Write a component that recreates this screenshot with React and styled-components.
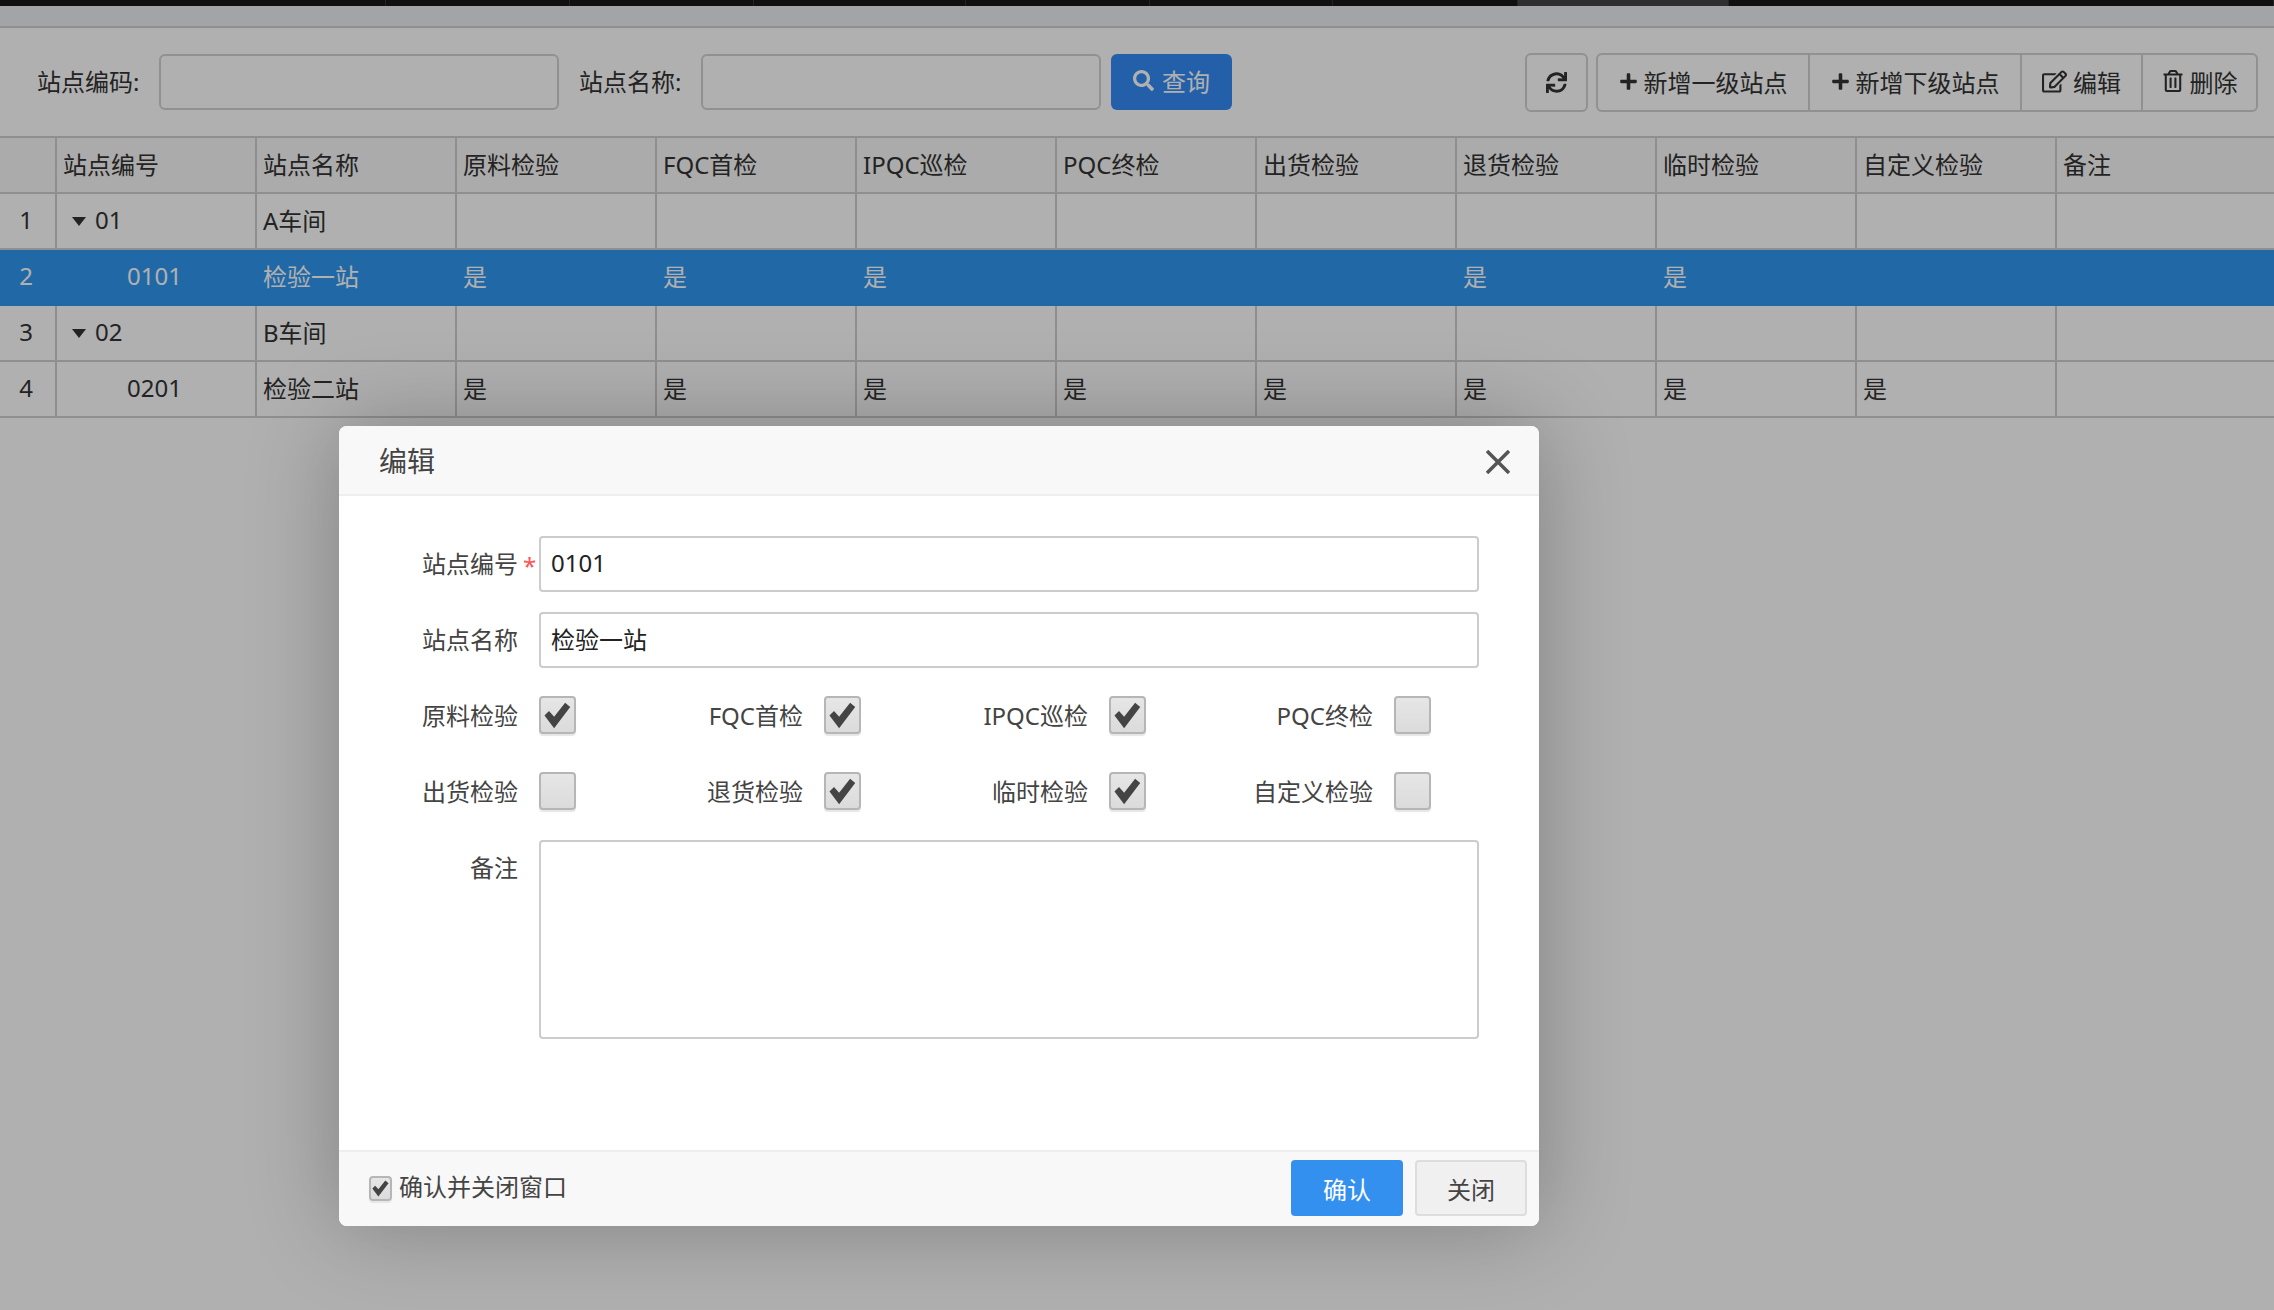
import React from 'react';
import styled, { createGlobalStyle } from 'styled-components';
import { FaPlus, FaRegEdit, FaRegTrashAlt, FaSearch, FaSync } from 'react-icons/fa';

const GlobalStyle = createGlobalStyle`
  html, body {
    margin: 0;
    padding: 0;
    background: #fff;
  }
  body {
    font-family: "Noto Sans", "Noto Sans CJK SC", sans-serif;
    font-size: 24px;
    color: #333;
  }
  * { box-sizing: border-box; }
`;

const Page = styled.div`
  height: 1310px;
  overflow: hidden;
  position: relative;
`;

const TabStrip = styled.div`
  height: 6px;
  background: #181818;
  display: flex;
`;

const TabSegment = styled.div`
  width: ${props => props.width}px;
  background: ${props => props.active ? '#444' : 'transparent'};
  border-right: 1px solid #333;
`;

const SubBar = styled.div`
  height: 22px;
  background: #eceef2;
  border-bottom: 2px solid #cfcfcf;
`;

const Toolbar = styled.div`
  height: 108px;
  padding: 0 16px 0 37px;
  display: flex;
  align-items: center;
`;

const SearchField = styled.div`
  display: flex;
  align-items: center;
  gap: 20px;
  margin-right: ${props => props.last ? 10 : 20}px;
`;

const SearchLabel = styled.label`
  width: 102px;
  padding-bottom: 3px;
  white-space: nowrap;
`;

const SearchInput = styled.input`
  width: 400px;
  height: 56px;
  border: 2px solid #d2d2d2;
  border-radius: 6px;
  background: #fff;
`;

const QueryButton = styled.button`
  width: 121px;
  height: 56px;
  padding: 0 0 3px;
  border: none;
  border-radius: 6px;
  background: #348bf5;
  color: #fff;
  font: inherit;
  display: flex;
  align-items: center;
  justify-content: center;
  gap: 8px;
`;

const ToolActions = styled.div`
  margin-left: auto;
  display: flex;
  gap: 8px;
`;

const ToolButton = styled.button`
  width: ${props => props.width}px;
  height: 55px;
  padding: 0 0 2px;
  border: none;
  border-right: 2px solid #d2d2d2;
  background: transparent;
  color: #333;
  font: inherit;
  display: flex;
  align-items: center;
  justify-content: center;
  gap: 6px;
  white-space: nowrap;

  &:last-child {
    border-right: none;
  }
`;

const RefreshButton = styled.button`
  width: 63px;
  height: 59px;
  padding: 0;
  display: flex;
  align-items: center;
  justify-content: center;
  border: 2px solid #d2d2d2;
  border-radius: 6px;
  background: transparent;
  color: #333;
`;

const ButtonGroup = styled.div`
  display: flex;
  border: 2px solid #d2d2d2;
  border-radius: 6px;
`;

const Table = styled.div`
  border-top: 2px solid #d0d0d0;
`;

const Row = styled.div`
  display: grid;
  grid-template-columns: 57px repeat(10, 200px) 1fr;
  height: 56px;
  border-bottom: 2px solid ${props => props.selected ? '#3097f2' : '#d0d0d0'};
  background: ${props => props.selected ? '#3097f2' : props.header ? '#f8f8f8' : '#fff'};
  color: ${props => props.selected ? '#fff' : '#333'};
`;

const Cell = styled.div`
  display: flex;
  align-items: center;
  padding: 0 0 3px ${props => props.indent || 6}px;
  border-right: 2px solid ${props => props.selected ? 'transparent' : '#d0d0d0'};
  white-space: nowrap;

  &:last-child {
    border-right: none;
  }
`;

const IndexCell = styled(Cell)`
  padding: 0 3px 3px 0;
  justify-content: center;
`;

const Caret = styled.span`
  width: 0;
  height: 0;
  margin: 4px 9px 0 0;
  border-left: 7px solid transparent;
  border-right: 7px solid transparent;
  border-top: 9px solid #333;
`;

const Overlay = styled.div`
  position: absolute;
  inset: 0;
  background: rgba(0, 0, 0, 0.31);
`;

const Modal = styled.div`
  position: absolute;
  left: 339px;
  top: 426px;
  width: 1200px;
  height: 800px;
  display: flex;
  flex-direction: column;
  background: #fff;
  border-radius: 8px;
  box-shadow: 0 0 90px rgba(0, 0, 0, 0.27);
`;

const ModalHeader = styled.div`
  height: 70px;
  padding: 0 29px 0 40px;
  display: flex;
  align-items: center;
  justify-content: space-between;
  background: #f8f8f8;
  border-bottom: 2px solid #eee;
  border-radius: 8px 8px 0 0;
  color: #444;
  font-size: 28px;
`;

const CloseIcon = styled.svg`
  width: 24px;
  height: 24px;
  margin-top: 4px;
  stroke: #555;
  stroke-width: 3.5;
  fill: none;
`;

const ModalBody = styled.div`
  flex: 1;
  padding: 40px 0 0 49px;
  display: flex;
  flex-direction: column;
  gap: 20px;
`;

const FieldRow = styled.div`
  display: grid;
  grid-template-columns: 130px 1fr;
  width: 1091px;
  align-items: ${props => props.top ? 'start' : 'center'};
`;

const FieldLabel = styled.label`
  position: relative;
  height: 56px;
  padding-bottom: 3px;
  display: flex;
  align-items: center;
  justify-content: flex-end;
  color: #444;
  white-space: nowrap;
`;

const RequiredMark = styled.span`
  position: absolute;
  left: 135px;
  top: 13px;
  color: #f55;
  font-size: 24px;
`;

const TextInput = styled.input`
  width: 940px;
  height: 56px;
  margin-left: 21px;
  padding: 0 10px 3px;
  border: 2px solid #ccc;
  border-radius: 4px;
  background: #fff;
  color: #222;
  font: inherit;
`;

const Remark = styled.textarea`
  width: 940px;
  height: 199px;
  margin-left: 21px;
  border: 2px solid #ccc;
  border-radius: 4px;
  background: #fff;
  resize: none;
`;

const CheckRow = styled.div`
  display: grid;
  grid-template-columns: repeat(4, 285px);
  height: 56px;
`;

const CheckItem = styled.div`
  display: grid;
  grid-template-columns: 130px auto;
  column-gap: 21px;
  align-items: center;
  justify-content: start;
`;

const CheckBox = styled.span`
  width: ${props => props.small ? 23 : 37}px;
  height: ${props => props.small ? 25 : 38}px;
  margin-bottom: ${props => props.small ? 0 : 2}px;
  flex: none;
  display: flex;
  align-items: center;
  justify-content: center;
  border: 2px solid #b6b6b6;
  border-radius: 4px;
  background: linear-gradient(#e6e6e6, #dbdbdb);
  box-shadow: 0 2px 1px #e6e6e6;
`;

const CheckMark = styled.svg`
  width: ${props => props.small ? 17 : 27}px;
  height: ${props => props.small ? 17 : 27}px;
  fill: #444;
`;

const ModalFooter = styled.div`
  height: 76px;
  padding: 8px 12px 10px 30px;
  display: flex;
  align-items: center;
  background: #f8f8f8;
  border-top: 2px solid #eee;
  border-radius: 0 0 8px 8px;
`;

const CloseConfirm = styled.label`
  display: flex;
  align-items: center;
  gap: 7px;
  margin-right: auto;
  color: #444;
`;

const ConfirmText = styled.span`
  margin-bottom: 5px;
`;

const FooterButton = styled.button`
  width: 112px;
  height: 56px;
  margin-left: 12px;
  padding: 1px 0 0;
  border: ${props => props.primary ? 'none' : '2px solid #ddd'};
  border-radius: 4px;
  background: ${props => props.primary ? '#3390ee' : '#f0f0f0'};
  color: ${props => props.primary ? '#fff' : '#444'};
  font: inherit;
`;

const columns = ['站点编号', '站点名称', '原料检验', 'FQC首检', 'IPQC巡检', 'PQC终检', '出货检验', '退货检验', '临时检验', '自定义检验', '备注'];

const rows = [
  { no: 1, code: '01', name: 'A车间', parent: true, marks: [] },
  { no: 2, code: '0101', name: '检验一站', selected: true, marks: [1, 1, 1, 0, 0, 1, 1, 0] },
  { no: 3, code: '02', name: 'B车间', parent: true, marks: [] },
  { no: 4, code: '0201', name: '检验二站', marks: [1, 1, 1, 1, 1, 1, 1, 1] },
];

const tabs = [386, 184, 184, 212, 184, 183, 185, 211, 545];

const checks = [
  [['原料检验', true], ['FQC首检', true], ['IPQC巡检', true], ['PQC终检', false]],
  [['出货检验', false], ['退货检验', true], ['临时检验', true], ['自定义检验', false]],
];

function Tick({ small }) {
  return (
    <CheckMark small={small} viewBox="0 0 27 28">
      <polygon points="0,14 4.7,9.3 10,15.3 21.4,0.7 26.7,5.3 10,27.3" />
    </CheckMark>
  );
}

function GridRow({ row }) {
  const sel = row.selected;
  return (
    <Row selected={sel}>
      <IndexCell selected={sel}>{row.no}</IndexCell>
      <Cell selected={sel} indent={row.parent ? 15 : 70}>
        {row.parent && <Caret />}
        {row.code}
      </Cell>
      <Cell selected={sel}>{row.name}</Cell>
      {Array.from({ length: 9 }).map((_, i) => (
        <Cell key={i} selected={sel}>{row.marks[i] ? '是' : ''}</Cell>
      ))}
    </Row>
  );
}

function App() {
  return (
    <Page>
      <GlobalStyle />
      <TabStrip>
        {tabs.map((w, i) => <TabSegment key={i} width={w} active={i === 7} />)}
      </TabStrip>
      <SubBar />
      <Toolbar>
        <SearchField>
          <SearchLabel>站点编码:</SearchLabel>
          <SearchInput />
        </SearchField>
        <SearchField last>
          <SearchLabel>站点名称:</SearchLabel>
          <SearchInput />
        </SearchField>
        <QueryButton><FaSearch size={21} />查询</QueryButton>
        <ToolActions>
          <RefreshButton><FaSync size={21} /></RefreshButton>
          <ButtonGroup>
            <ToolButton width={212}><FaPlus size={19} />新增一级站点</ToolButton>
            <ToolButton width={212}><FaPlus size={19} />新增下级站点</ToolButton>
            <ToolButton width={121}><FaRegEdit size={25} />编辑</ToolButton>
            <ToolButton width={113}><FaRegTrashAlt size={22} />删除</ToolButton>
          </ButtonGroup>
        </ToolActions>
      </Toolbar>
      <Table>
        <Row header>
          <IndexCell />
          {columns.map(c => <Cell key={c}>{c}</Cell>)}
        </Row>
        {rows.map(r => <GridRow key={r.no} row={r} />)}
      </Table>
      <Overlay />
      <Modal>
        <ModalHeader>
          编辑
          <CloseIcon viewBox="0 0 24 24">
            <path d="M1 1 L23 23 M23 1 L1 23" />
          </CloseIcon>
        </ModalHeader>
        <ModalBody>
          <FieldRow>
            <FieldLabel>站点编号<RequiredMark>*</RequiredMark></FieldLabel>
            <TextInput defaultValue="0101" />
          </FieldRow>
          <FieldRow>
            <FieldLabel>站点名称</FieldLabel>
            <TextInput defaultValue="检验一站" />
          </FieldRow>
          {checks.map((line, i) => (
            <CheckRow key={i}>
              {line.map(([label, on]) => (
                <CheckItem key={label}>
                  <FieldLabel>{label}</FieldLabel>
                  <CheckBox>{on && <Tick />}</CheckBox>
                </CheckItem>
              ))}
            </CheckRow>
          ))}
          <FieldRow top>
            <FieldLabel>备注</FieldLabel>
            <Remark />
          </FieldRow>
        </ModalBody>
        <ModalFooter>
          <CloseConfirm>
            <CheckBox small><Tick small /></CheckBox>
            <ConfirmText>确认并关闭窗口</ConfirmText>
          </CloseConfirm>
          <FooterButton primary>确认</FooterButton>
          <FooterButton>关闭</FooterButton>
        </ModalFooter>
      </Modal>
    </Page>
  );
}

export default App;
